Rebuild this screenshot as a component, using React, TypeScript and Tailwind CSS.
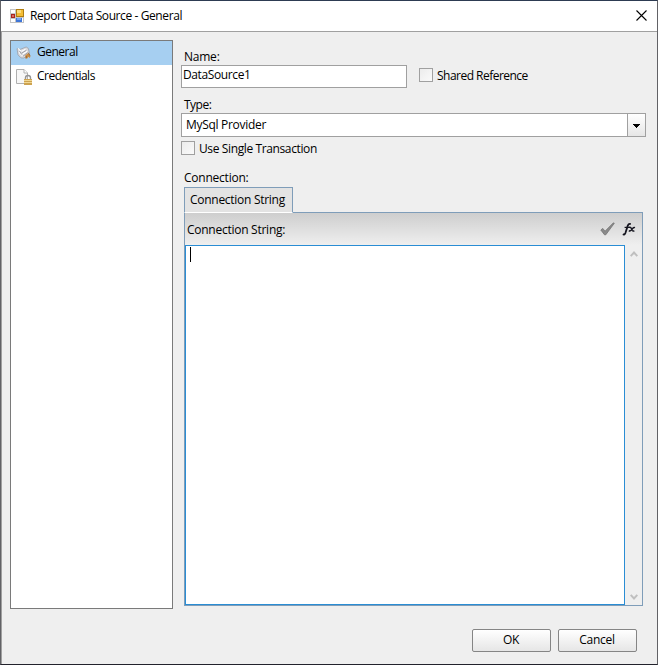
import React from "react";

function AppIcon() {
  return (
    <svg width="14" height="14" viewBox="0 0 14 14" shapeRendering="crispEdges" className="-mt-px">
      <rect width="14" height="14" fill="#c4c4c4" />
      <rect x="1" y="1" width="4" height="3" fill="#fff" />
      <rect x="1" y="10" width="4" height="3" fill="#fff" />
      <rect x="12" y="9" width="1" height="4" fill="#fff" />
      <rect x="1" y="5" width="4" height="4" fill="#a8241f" />
      <rect x="2" y="6" width="2" height="2" fill="#dc6a5e" />
      <rect x="6" y="0" width="8" height="8" fill="#b07d10" />
      <rect x="7" y="1" width="6" height="6" fill="#f3bd35" />
      <rect x="7" y="1" width="4" height="3" fill="#fbdc7c" />
      <rect x="6" y="9" width="6" height="4" fill="#3f76d8" />
      <rect x="7" y="9" width="4" height="2" fill="#79a6f0" />
    </svg>
  );
}

function GeneralIcon() {
  return (
    <svg width="16" height="16" viewBox="0 0 16 16" className="shrink-0">
      <path d="M1 3.6l3 .9L10.200 2l2.200 1.500.9 4.700L8 13 5 12.900 2 9.800z" fill="#dcdce0" stroke="#96969e" strokeWidth=".7" />
      <path d="M2 3.400l3.400 3.200M3 7.400l3.400 3.200M6 6.300l3.500-2.200M7 9l4-2.800" stroke="#fff" strokeWidth="1.100" />
      <path d="M5.500 8.200l4.800-2.800M7 11.200l4.800-3.600M3.600 6l2 3.600" stroke="#85858f" strokeWidth=".7" />
      <path d="M9.200 10.400l2.300-1.900 1.500.8 1.500 2.200-.8 1.500-1.300-1.200-1.400 2-1.400-.9z" fill="#c98a42" />
      <path d="M12.400 7.800l1.600 3M10.500 11.200l-.6 2.200" stroke="#9b6228" strokeWidth="1" />
    </svg>
  );
}

function CredentialsIcon() {
  return (
    <svg width="16" height="16" viewBox="0 0 16 16" className="shrink-0">
      <path d="M.5.500h7.500l3.500 3.500v10.500H.5z" fill="#f7f7f7" stroke="#b0b0b0" />
      <path d="M8 .500V4h3.500" fill="#fff" stroke="#b0b0b0" />
      <path d="M9.500 10.500V8.800q0-2.300 2.500-2.300t2.500 2.300v1.700" fill="none" stroke="#949494" strokeWidth="1.400" />
      <rect x="8" y="10" width="8" height="6" fill="#cda350" />
      <path d="M8 11.500h8M8 13.500h8" stroke="#f0d794" />
    </svg>
  );
}

function CheckBox({ label, tracking }: { label: string; tracking: string }) {
  return (
    <div className="flex h-[14px] items-center">
      <div className="h-[14px] w-[14px] border border-[#a0a0a0] bg-linear-to-br from-[#ececec] to-[#fafafa]" />
      <span className={`mt-[2px] ml-1 whitespace-nowrap leading-[14px] ${tracking}`}>{label}</span>
    </div>
  );
}

function PushButton({ label }: { label: string }) {
  return (
    <button className="flex h-[23px] w-[79px] items-center justify-center rounded-[2px] border border-[#858585] bg-linear-to-b from-white to-[#e6e6e6] leading-[14px] tracking-[-0.3px]">
      <span className="-mt-px -ml-px">{label}</span>
    </button>
  );
}

export default function App() {
  return (
    <div className="flex h-[665px] w-[658px] flex-col border border-t-[#2d3b52] border-r-[#626266] border-b-[#22222c] border-l-[#626266] bg-[#efefef] font-['Open_Sans','Noto_Sans',sans-serif] text-[12px] tracking-[-0.23px] text-black">
      <header className="flex h-[31px] shrink-0 items-center justify-between border-b border-[#a0a0a0] bg-white pr-[10px] pl-[9px]">
        <div className="flex items-center gap-[6px]">
          <AppIcon />
          <span className="tracking-[-0.4px]">Report Data Source - General</span>
        </div>
        <svg width="11" height="11" viewBox="0 0 11 11" className="-mt-[2px]">
          <path d="M.5.5l10 10M10.5.5l-10 10" stroke="#000" strokeWidth="1.1" />
        </svg>
      </header>
      <div className="flex min-h-0 flex-1 flex-col border-l border-[#a0a0a0]">
        <main className="flex pt-2 pl-2">
          <nav className="h-[569px] w-[163px] shrink-0 border border-[#7a7a7a] bg-white tracking-[-0.5px]">
            <div className="flex h-6 items-center gap-[5px] bg-[#a6cff1] pl-[5px]">
              <GeneralIcon />
              <span className="-mt-[2px]">General</span>
            </div>
            <div className="flex h-6 items-center gap-[5px] pl-[5px]">
              <CredentialsIcon />
              <span className="-mt-[2px]">Credentials</span>
            </div>
          </nav>
          <section className="ml-2 flex w-[465px] flex-col pt-[9px]">
            <label className="h-4 pl-[3px] leading-4">Name:</label>
            <div className="flex h-[23px] items-start">
              <div className="h-[23px] w-[226px] border border-[#a0a0a0] bg-white pl-px leading-[18px] tracking-[-0.38px]">DataSource1</div>
              <div className="ml-3 pt-[3px]">
                <CheckBox label="Shared Reference" tracking="tracking-[-0.52px]" />
              </div>
            </div>
            <label className="mt-[9px] h-4 pl-[3px] leading-4 tracking-[-0.5px]">Type:</label>
            <div className="flex h-6 border border-[#a0a0a0] bg-white">
              <span className="flex-1 pl-1 leading-[22px] tracking-[-0.3px]">MySql Provider</span>
              <div className="flex w-[18px] items-center justify-center border-l border-[#a0a0a0] bg-linear-to-b from-white to-[#e6e6e6]">
                <svg width="7" height="4" viewBox="0 0 7 4" className="mt-px" shapeRendering="crispEdges">
                  <path d="M0 0h7v1H6v1H5v1H4v1H3V3H2V2H1V1H0z" />
                </svg>
              </div>
            </div>
            <div className="mt-1">
              <CheckBox label="Use Single Transaction" tracking="tracking-[-0.38px]" />
            </div>
            <label className="mt-[15px] h-[17px] pl-[3px] leading-4">Connection:</label>
            <div className="ml-[3px] flex h-[26px] w-[459px]">
              <div className="w-[109px] border border-[#7f9db9] border-b-white bg-[#e3e3e3] pl-[5px] leading-[24px] tracking-[-0.28px]">Connection String</div>
              <div className="flex-1 border-b border-[#7f9db9]" />
            </div>
            <div className="ml-[3px] flex h-[393px] w-[459px] flex-col border border-t-0 border-[#7f9db9]">
              <div className="flex h-8 shrink-0 items-center bg-linear-to-b from-[#cecece] to-[#efefef] pr-[6px] pl-[2px]">
                <span className="mt-[2px] flex-1 tracking-[-0.26px]">Connection String:</span>
                <svg width="15" height="14" viewBox="0 0 15 14" className="-mt-px">
                  <path d="M.8 8l2-1.600 2.200 2.800L13.400.8l.9.5L5.800 12.800H4.500z" fill="#8a8a8a" stroke="#6c6c6c" strokeWidth=".7" />
                </svg>
                <svg width="14" height="14" viewBox="0 0 14 14" className="ml-[7px] -mt-px">
                  <path d="M.8 12.300q1.800.8 2.600-1.300L5.800 3.600Q6.600 1.400 8.800 2.100" fill="none" stroke="#15151f" strokeWidth="1.800" />
                  <path d="M2.600 5.400h5.400" stroke="#15151f" strokeWidth="1.200" />
                  <path d="M7.400 5.400q1.400-.3 2 1.100l.8 1.800q.6 1.200 2.200.6M13 5.600q-1.300-.5-2.400.9L9.300 8.100q-.9 1.200-2.500.6" fill="none" stroke="#15151f" strokeWidth="1.450" />
                </svg>
              </div>
              <div className="flex min-h-0 flex-1">
                <div className="w-[440px] border border-[#2a8dd4] bg-white pt-px pl-1">
                  <div className="h-[15px] w-px bg-black" />
                </div>
                <div className="flex flex-1 flex-col items-center justify-between pt-[6px] pb-[5px]">
                  <svg width="8" height="6" viewBox="0 0 8 6">
                    <path d="M.7 5.2L4 1.5l3.3 3.7" fill="none" stroke="#bfbfbf" strokeWidth="1.9" />
                  </svg>
                  <svg width="8" height="6" viewBox="0 0 8 6">
                    <path d="M.7.8L4 4.5 7.3.8" fill="none" stroke="#bfbfbf" strokeWidth="1.9" />
                  </svg>
                </div>
              </div>
            </div>
          </section>
        </main>
        <footer className="mt-5 flex justify-end gap-[7px] pr-5">
          <PushButton label="OK" />
          <PushButton label="Cancel" />
        </footer>
      </div>
    </div>
  );
}
